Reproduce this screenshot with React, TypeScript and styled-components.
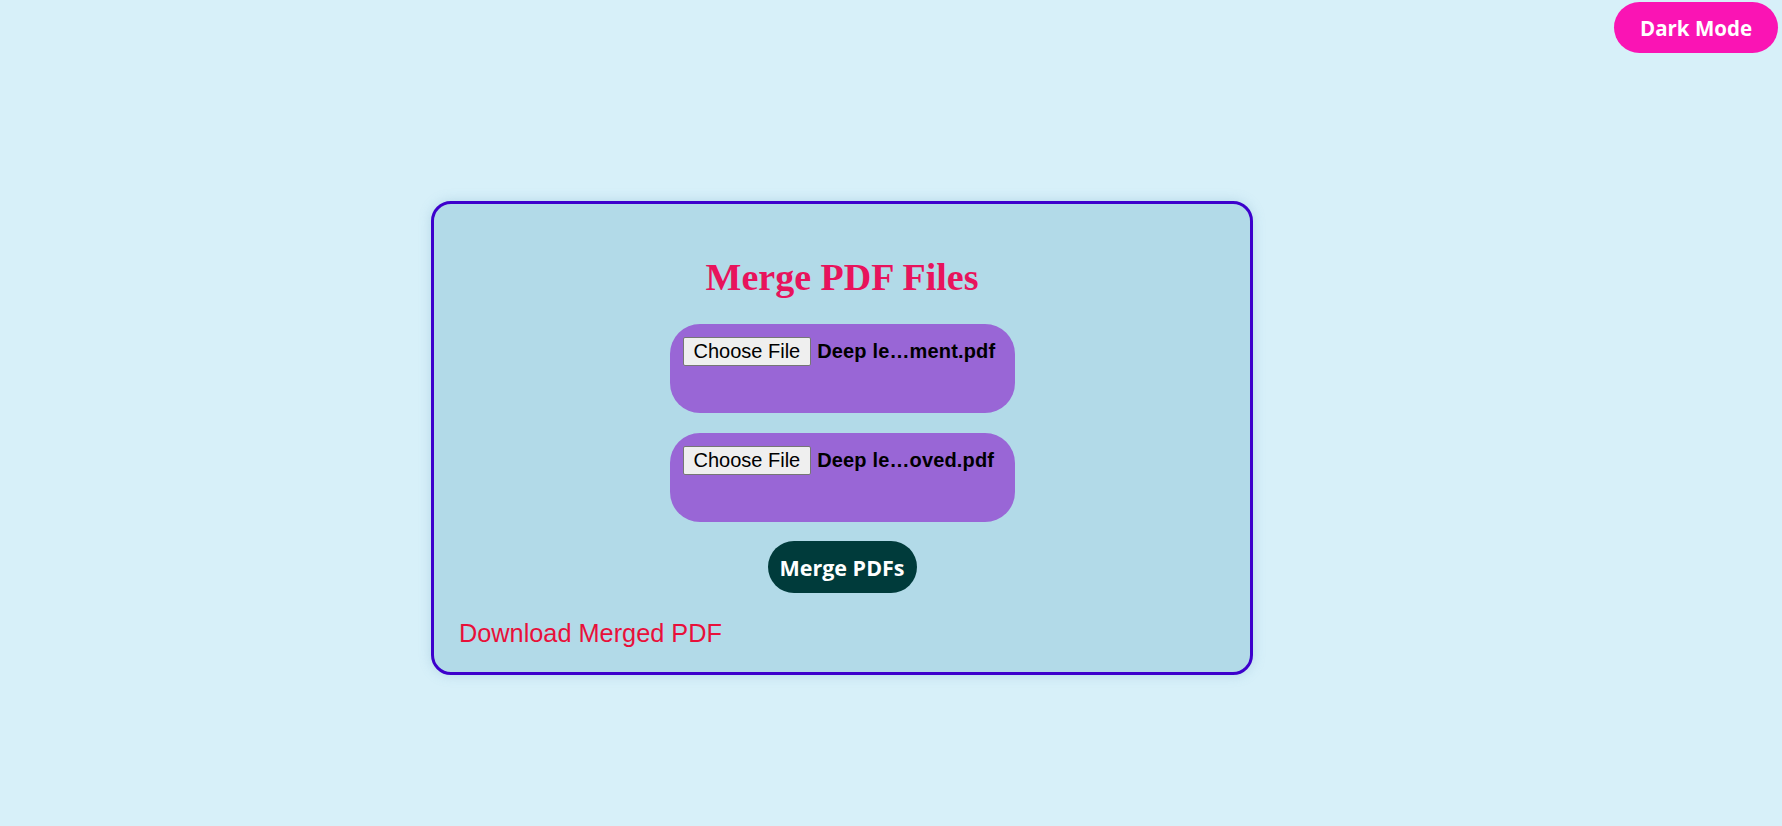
import styled, { createGlobalStyle } from "styled-components";

const GlobalStyle = createGlobalStyle`
  html, body {
    margin: 0;
    padding: 0;
  }
  body {
    background-color: #d7f0f9;
    font-family: "Liberation Sans", Arial, sans-serif;
    min-height: 826px;
  }
`;

const Page = styled.div`
  display: flex;
  flex-direction: column;
  min-height: 826px;
`;

const TopBar = styled.div`
  display: flex;
  justify-content: flex-end;
  padding: 2px 4px 0 0;
`;

const ToggleButton = styled.button`
  width: 164px;
  height: 51px;
  border: none;
  border-radius: 26px;
  background-color: #fa14b4;
  color: #ffffff;
  font-family: "Open Sans", sans-serif;
  font-weight: 700;
  font-size: 20.5px;
  cursor: pointer;
`;

const Card = styled.div`
  align-self: flex-start;
  margin: 148px 0 0 431px;
  width: 816px;
  padding: 51px 0 24px;
  box-sizing: content-box;
  background-color: #b2dae8;
  border: 3px solid #3d00cc;
  border-radius: 20px;
  box-shadow: 0 0 12px rgba(120, 170, 200, 0.35);
  display: flex;
  flex-direction: column;
  align-items: center;
`;

const Title = styled.h1`
  margin: 0 0 25px;
  font-family: "Liberation Serif", "Times New Roman", serif;
  font-size: 38px;
  font-weight: 700;
  color: #e8135c;
`;

const FileBox = styled.div`
  width: 345px;
  height: 89px;
  box-sizing: border-box;
  padding: 13px;
  margin-bottom: ${(p: { $last?: boolean }) => (p.$last ? "19px" : "20px")};
  background-color: #9966d6;
  border-radius: 30px;
  display: flex;
  align-items: flex-start;
  gap: 6px;
`;

const ChooseButton = styled.span`
  display: inline-block;
  height: 29px;
  box-sizing: border-box;
  padding: 2px 10px 0;
  background-color: #efefef;
  border: 1px solid #767676;
  border-radius: 2px;
  font-size: 20px;
  line-height: 23px;
  color: #000000;
`;

const FileName = styled.span`
  font-size: 20px;
  font-weight: 700;
  line-height: 29px;
  letter-spacing: 0.15px;
  color: #000000;
  white-space: nowrap;
`;

const MergeButton = styled.button`
  width: 149px;
  height: 52px;
  border: none;
  border-radius: 26px;
  background-color: #003b3b;
  color: #ffffff;
  font-family: "Open Sans", sans-serif;
  font-weight: 700;
  font-size: 21.5px;
  cursor: pointer;
  margin-bottom: 26px;
`;

const DownloadLink = styled.a`
  align-self: flex-start;
  margin-left: 25px;
  font-size: 25.3px;
  color: #e8103a;
  text-decoration: none;
`;

const files = ["Deep le…ment.pdf", "Deep le…oved.pdf"];

const App = () => {
  return (
    <>
      <GlobalStyle />
      <Page>
        <TopBar>
          <ToggleButton>Dark Mode</ToggleButton>
        </TopBar>
        <Card>
          <Title>Merge PDF Files</Title>
          {files.map((name, i) => (
            <FileBox key={name} $last={i === files.length - 1}>
              <ChooseButton>Choose File</ChooseButton>
              <FileName>{name}</FileName>
            </FileBox>
          ))}
          <MergeButton>Merge PDFs</MergeButton>
          <DownloadLink href="#">Download Merged PDF</DownloadLink>
        </Card>
      </Page>
    </>
  );
};

export default App;
